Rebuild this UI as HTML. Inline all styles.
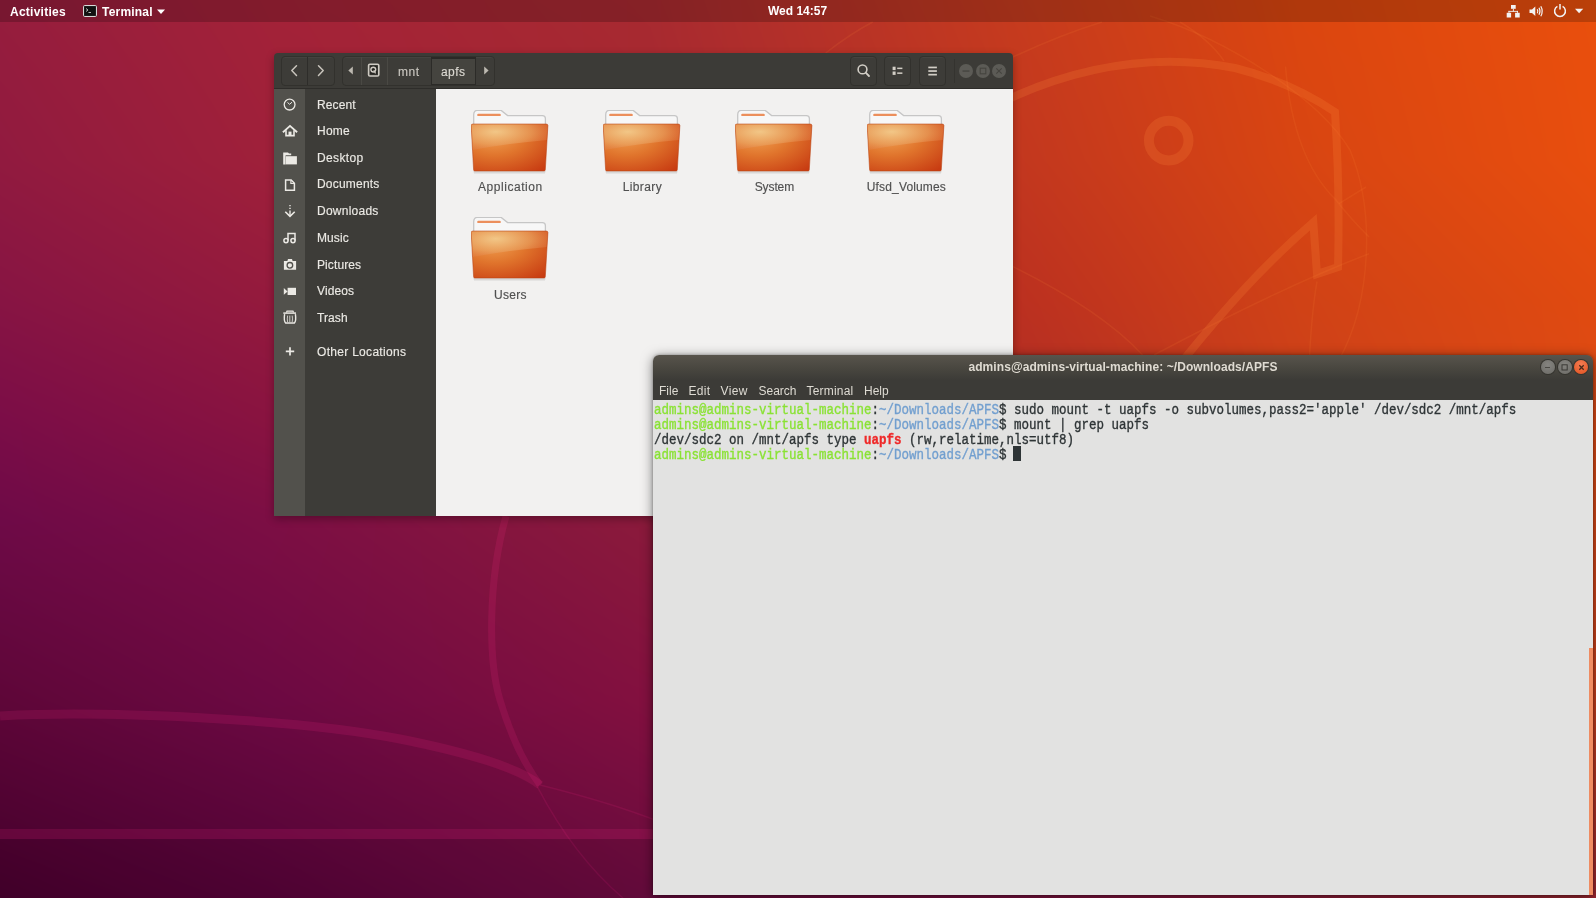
<!DOCTYPE html>
<html><head><meta charset="utf-8">
<style>
*{margin:0;padding:0;box-sizing:border-box}
html,body{width:1596px;height:898px;overflow:hidden;font-family:"Liberation Sans",sans-serif}
body{background:linear-gradient(50deg,#44002c 0%,#700a47 28%,#961d3d 45%,#c63b1e 70%,#e94f0c 100%)}
.abs{position:absolute}
#wall{position:absolute;left:0;top:0;width:1596px;height:898px}
#topbar{position:absolute;left:0;top:0;width:1596px;height:22px;background:rgba(0,0,0,0.2)}
.tb{color:#fff;font-weight:bold;font-size:12px;line-height:14px}
/* nautilus */
#naut{position:absolute;left:274px;top:53px;width:739px;height:463px;border-radius:4px 4px 0 0;overflow:hidden;box-shadow:0 3px 9px rgba(0,0,0,0.3)}
#nhead{position:absolute;left:0;top:0;width:739px;height:36px;background:#3c3b37;border-bottom:1px solid #2e2d2a}
#nside1{position:absolute;left:0;top:36px;width:31px;height:427px;background:#52514c}
#nside2{position:absolute;left:31px;top:36px;width:131px;height:427px;background:#3d3c38}
#ncont{position:absolute;left:162px;top:36px;width:577px;height:427px;background:#f2f1f0}
.hbtn{position:absolute;border:1px solid #32312d;border-radius:4px;background:#3d3c38;box-shadow:inset 0 1px 0 rgba(255,255,255,0.04)}
.hl{color:#c9c6bf;font-size:12px;line-height:14px;letter-spacing:0.6px;-webkit-text-stroke:0.15px currentColor}
.wbtn{position:absolute;top:10.5px;width:14px;height:14px;border-radius:50%;background:#5c5b56}
.wbtn svg{position:absolute;left:0;top:0}
.side{position:absolute;left:43px;color:#ebe9e4;font-size:12px;line-height:14px;letter-spacing:0.1px;-webkit-text-stroke:0.15px currentColor}
.flabel{position:absolute;width:132px;text-align:center;color:#505050;font-size:12px;line-height:14px;-webkit-text-stroke:0.15px currentColor}
/* terminal */
#term{position:absolute;left:653px;top:355px;width:940px;height:540px;border-radius:6px 6px 0 0;overflow:hidden;box-shadow:0 2px 12px rgba(0,0,0,0.5),0 0 3px rgba(0,0,0,0.3)}
#ttitle{position:absolute;left:0;top:0;width:940px;height:45px;background:linear-gradient(#58544c 0px,#48463f 14px,#3c3b37 25px,#3c3b37 45px)}
#tcont{position:absolute;left:0;top:45px;width:940px;height:495px;background:#e2e2e1}
.tline{position:absolute;left:1px;font-family:"Liberation Mono",monospace;font-size:14.3px;color:#2e3436;white-space:pre;line-height:15px;-webkit-text-stroke:0.35px currentColor;transform:scaleX(0.874);transform-origin:0 0}
.g{color:#8ae234}
.b{color:#729fcf}
.r{color:#ef2929;font-weight:bold}
.cur{background:#2e3436}
.menu{position:absolute;top:29px;color:#dfdcd4;font-size:12px;line-height:14px}
.tbtn{position:absolute;top:5px;width:14px;height:14px;border-radius:50%;box-shadow:0 0 0 1px #35342f}
.tbtn svg{position:absolute;left:0.5px;top:0.5px}
</style></head><body>
<svg width="0" height="0" style="position:absolute"><defs>
<linearGradient id="pg" x1="0" y1="0" x2="0" y2="1"><stop offset="0" stop-color="#f6f6f6" stop-opacity="0"/><stop offset="1" stop-color="#c8c8c8"/></linearGradient>
<radialGradient id="fg1" cx="0.3" cy="0.25" r="0.95"><stop offset="0" stop-color="#f0a050"/><stop offset="0.45" stop-color="#e0742c"/><stop offset="1" stop-color="#c83c12"/></radialGradient>
<radialGradient id="fg2" cx="0.32" cy="0.3" r="0.8"><stop offset="0" stop-color="#f2c98a" stop-opacity="0.95"/><stop offset="0.6" stop-color="#eaa666" stop-opacity="0.6"/><stop offset="1" stop-color="#e27a45" stop-opacity="0.3"/></radialGradient>
</defs></svg>
<canvas id="wall" width="1596" height="898"></canvas>
<svg id="art" class="abs" style="left:0;top:0" width="1596" height="898" viewBox="0 0 1596 898" fill="none">
 <g stroke="#ff8a3a" stroke-opacity="0.2" stroke-linejoin="miter">
  <path d="M880 178 Q960 118 1013 97 C1087 64 1161 54 1235 68 C1275 78 1305 92 1335 112 Q1340 190 1338 267 L1317 274 L1313.3 222.2 Q1240 285 1160 390" stroke-width="8"/>
  <circle cx="1168.7" cy="140.6" r="19.8" stroke-width="10"/>
 </g>
 <g stroke="#ff8a3a" stroke-opacity="0.12" stroke-width="1.5">
  <path d="M1150 16 C1230 40 1320 100 1350 150 C1375 210 1372 300 1339 360"/>
  <path d="M1285.5 66.5 C1290 120 1305 170 1336 200 C1350 218 1360 228 1369 237"/>
  <path d="M1339 203.6 L1366 187"/>
  <path d="M1153.9 355 C1220 320 1300 280 1369 253.7"/>
  <path d="M1013 266.7 C1060 290 1110 320 1142.7 355"/>
  <path d="M1309.6 355 Q1312 310 1317 281.5"/>
  <path d="M1013 57 Q1060 35 1102 22"/>
  <path d="M1180 22 Q1210 40 1224 61"/>
  <path d="M825.7 53 Q850 34 872.7 22"/>
 </g>
 <g stroke="#ff2a8a" stroke-opacity="0.14">
  <path d="M0 716 C100 710 300 719 400 739 C470 753 520 769 540 785" stroke-width="9"/>
  <path d="M506 516 C488 580 488 660 500 700 C512 740 525 765 540 785" stroke-width="7"/>
  <path d="M0 834 H660" stroke-width="10"/>
 </g>
 <g stroke="#ff2a8a" stroke-opacity="0.12" stroke-width="1.6">
  <path d="M540 785 C580 795 620 806 660 822"/>
  <path d="M537.5 787 C560 830 590 870 623 898"/>
 </g>
 <rect x="0" y="839" width="660" height="59" fill="#000" fill-opacity="0.05"/>
</svg>
<script>
(function(){
var xs=[0,270,650,1013,1300,1596], ys=[0,160,300,420,520,700,898];
var G=[
["961d3d","a32238","a82a30","c63b1e","dc460f","e94f0c"],
["911a3f","9f203a","a52730","c2371f","d84512","e84e0e"],
["871443","941a3d","a1232f","bb3020","d04216","e04a10"],
["7b0d47","891340","96203a","b02d26","cc401b","dd4a16"],
["6e0a47","7c0e44","8b1a3b","a82a28","c53c1c","d84818"],
["5e0638","6c0942","83103f","8e1a3a","a82a28","c83f1c"],
["44002c","520335","680b3e","7a1040","8a1a38","9a2630"]];
function h(s){return [parseInt(s.substr(0,2),16),parseInt(s.substr(2,2),16),parseInt(s.substr(4,2),16)];}
var C=G.map(function(r){return r.map(h);});
var cv=document.getElementById('wall'),ctx=cv.getContext('2d');
var W=1596,H=898,img=ctx.createImageData(W,H),d=img.data;
var xi=new Array(W),xt=new Array(W);
for(var x=0;x<W;x++){var i=0;while(i<xs.length-2&&x>xs[i+1])i++;xi[x]=i;xt[x]=(x-xs[i])/(xs[i+1]-xs[i]);}
for(var y=0;y<H;y++){var j=0;while(j<ys.length-2&&y>ys[j+1])j++;var ty=(y-ys[j])/(ys[j+1]-ys[j]);
 for(var x=0;x<W;x++){var i=xi[x],tx=xt[x],p=(y*W+x)*4;
  for(var k=0;k<3;k++){var a=C[j][i][k]*(1-tx)+C[j][i+1][k]*tx,b=C[j+1][i][k]*(1-tx)+C[j+1][i+1][k]*tx;d[p+k]=a*(1-ty)+b*ty;}
  d[p+3]=255;}}
ctx.putImageData(img,0,0);
})();
</script>

<div id="topbar">
 <div class="abs tb" style="left:10px;top:4.5px;letter-spacing:0.25px">Activities</div>
 <svg class="abs" style="left:83px;top:5px" width="14" height="12" viewBox="0 0 14 12">
  <rect x="0.5" y="0.5" width="13" height="11" rx="1.2" fill="#2a2a2a" stroke="#d8d8d8" stroke-width="1"/>
  <rect x="1.5" y="1.5" width="11" height="9" fill="#111"/>
  <path d="M3 3.5 L5 5 L3 6.5" stroke="#ccc" stroke-width="0.9" fill="none"/>
  <rect x="5.5" y="7" width="2.5" height="0.9" fill="#ccc"/>
 </svg>
 <div class="abs tb" style="left:102px;top:4.5px;letter-spacing:0.2px">Terminal</div>
 <svg class="abs" style="left:156px;top:9px" width="10" height="6" viewBox="0 0 10 6"><path d="M1 0.5 H9 L5 5 Z" fill="#fff"/></svg>
 <div class="abs tb" style="left:768px;top:4px">Wed 14:57</div>
 <svg class="abs" style="left:1504px;top:3px" width="18" height="16" viewBox="0 0 18 16" fill="#f2f2f2">
  <rect x="7" y="2" width="4.7" height="3.8"/>
  <rect x="2.7" y="9.8" width="4.4" height="4.7"/>
  <rect x="11.1" y="9.8" width="4.6" height="4.7"/>
  <rect x="8.9" y="5.6" width="0.9" height="2.8"/>
  <rect x="4.5" y="7.9" width="9.4" height="0.9"/>
  <rect x="4.5" y="7.9" width="0.9" height="2"/>
  <rect x="13" y="7.9" width="0.9" height="2"/>
 </svg>
 <svg class="abs" style="left:1527px;top:3px" width="18" height="16" viewBox="0 0 18 16" fill="none">
  <path d="M2.5 6.5 H5 L8.3 3.5 V13 L5 10 H2.5 Z" fill="#f2f2f2"/>
  <path d="M10.3 6.3 Q11.4 8.2 10.3 10.2" stroke="#f2f2f2" stroke-width="1.2"/>
  <path d="M12 4.8 Q14 8.2 12 11.7" stroke="#f2f2f2" stroke-width="1.2"/>
  <path d="M13.8 3.2 Q16.6 8.2 13.8 13.3" stroke="#f2f2f2" stroke-width="1.2"/>
 </svg>
 <svg class="abs" style="left:1552px;top:3px" width="16" height="16" viewBox="0 0 16 16" fill="none">
  <path d="M5.4 3.4 A5.4 5.4 0 1 0 10.6 3.4" stroke="#f2f2f2" stroke-width="1.5"/>
  <path d="M8 1 V6.6" stroke="#f2f2f2" stroke-width="1.5"/>
 </svg>
 <svg class="abs" style="left:1574px;top:8px" width="10" height="6" viewBox="0 0 10 6"><path d="M1 0.8 H9.2 L5.1 5.2 Z" fill="#f2f2f2"/></svg>
</div>

<div id="naut">
 <div id="nhead">
  <div class="hbtn" style="left:7px;top:3px;width:54px;height:30px"></div>
  <div class="abs" style="left:33px;top:4px;width:1px;height:28px;background:#2e2d2a"></div>
  <svg class="abs" style="left:14px;top:10px" width="40" height="16" viewBox="0 0 40 16" fill="none" stroke="#c8c4bc" stroke-width="1.5" stroke-linecap="round" stroke-linejoin="round">
   <path d="M8.5 2.8 L3.8 7.6 L8.5 12.4"/>
   <path d="M30.5 2.8 L35.2 7.6 L30.5 12.4"/>
  </svg>
  <div class="hbtn" style="left:68px;top:3px;width:153px;height:30px"></div>
  <div class="abs" style="left:87px;top:4px;width:1px;height:28px;background:#4a4944"></div>
  <div class="abs" style="left:113px;top:4px;width:1px;height:28px;background:#4a4944"></div>
  <div class="abs" style="left:157px;top:4px;width:45px;height:28px;background:#45443f;border:1px solid #2c2b28;border-top:2px solid #2a2926"></div>
  <svg class="abs" style="left:72px;top:10px" width="12" height="16" viewBox="0 0 12 16"><path d="M6.8 3.5 V11.5 L2.3 7.5 Z" fill="#bdb9b1"/></svg>
  <svg class="abs" style="left:93px;top:10px" width="14" height="15" viewBox="0 0 14 15" fill="none">
   <rect x="1.6" y="1.2" width="10.2" height="11.8" rx="1.3" stroke="#cfcbc3" stroke-width="1.6"/>
   <rect x="3.2" y="2.8" width="7" height="8.6" fill="#262521"/>
   <circle cx="6.3" cy="6.6" r="2.4" stroke="#cfcbc3" stroke-width="1.4"/>
   <path d="M6.8 7.2 L8.6 10.4" stroke="#cfcbc3" stroke-width="1.2"/>
  </svg>
  <div class="abs hl" style="left:124px;top:11.5px">mnt</div>
  <div class="abs hl" style="left:167px;top:11.5px;color:#dcd9d2;letter-spacing:0.45px">apfs</div>
  <svg class="abs" style="left:207px;top:10px" width="10" height="16" viewBox="0 0 10 16"><path d="M3.2 3.5 V11.5 L7.6 7.5 Z" fill="#bdb9b1"/></svg>

  <div class="hbtn" style="left:576px;top:3px;width:27px;height:30px"></div>
  <div class="hbtn" style="left:610px;top:3px;width:27px;height:30px"></div>
  <div class="hbtn" style="left:645px;top:3px;width:27px;height:30px"></div>
  <svg class="abs" style="left:580px;top:8px" width="20" height="20" viewBox="0 0 20 20" fill="none" stroke="#d2cec6" stroke-width="1.6">
   <circle cx="8.5" cy="8.4" r="4.4"/>
   <path d="M11.7 11.6 L15 15" stroke-linecap="round" stroke-width="1.8"/>
  </svg>
  <svg class="abs" style="left:614px;top:8px" width="20" height="20" viewBox="0 0 20 20" fill="#d2cec6">
   <rect x="4.6" y="5.7" width="3" height="3.4"/><rect x="4.6" y="10.5" width="3" height="3.4"/>
   <rect x="9.2" y="6.6" width="5.2" height="1.5"/><rect x="9.2" y="11.4" width="5.2" height="1.5"/>
  </svg>
  <svg class="abs" style="left:649px;top:8px" width="20" height="20" viewBox="0 0 20 20" fill="#d2cec6">
   <rect x="5.3" y="5.6" width="8.6" height="1.7"/><rect x="5.3" y="9.2" width="8.6" height="1.7"/><rect x="5.3" y="12.8" width="8.6" height="1.7"/>
  </svg>
  <div class="abs" style="left:680px;top:6px;width:1px;height:24px;background:#34332f"></div>
  <div class="wbtn" style="left:685px"><svg width="14" height="14" viewBox="0 0 14 14"><rect x="3.5" y="6.4" width="7" height="1.3" fill="#45443f"/></svg></div>
  <div class="wbtn" style="left:702px"><svg width="14" height="14" viewBox="0 0 14 14"><rect x="4.2" y="4.2" width="5.6" height="5.6" fill="none" stroke="#45443f" stroke-width="1.1"/></svg></div>
  <div class="wbtn" style="left:718px"><svg width="14" height="14" viewBox="0 0 14 14"><path d="M4.3 4.3 L9.7 9.7 M9.7 4.3 L4.3 9.7" stroke="#45443f" stroke-width="1.1"/></svg></div>
 </div>
 <div id="nside1"></div>
 <div id="nside2"></div>
 <div id="ncont"></div>
 <svg class="abs" style="left:0;top:36px" width="31" height="330" viewBox="0 0 31 330" fill="none" stroke="#ebe9e4" stroke-width="1.4">
  <circle cx="15.6" cy="15.6" r="5.4" stroke-width="1.3"/>
  <path d="M13.5 13.5 L15.6 15.3 L18 13.2" stroke-width="1"/>
  <path d="M9.6 42.6 L16 36.9 L22.4 42.6" stroke-width="1.9" stroke-linecap="square"/>
  <path d="M12 41.2 V46.6 H20 V41.2" stroke-width="1.6"/>
  <rect x="14.5" y="42.6" width="3" height="4.4" fill="#ebe9e4" stroke="none"/>
  <path d="M9.2 63.4 H14 L15 64.4 H17.2 V66.3 H11.6 V75.4 H9.2 Z" fill="#ebe9e4" stroke="none"/>
  <rect x="11.8" y="67.2" width="11.1" height="8.2" fill="#ebe9e4" stroke="none"/>
  <path d="M11.6 91 H17.2 L20.4 94.2 V101.3 H11.6 Z" stroke-width="1.5" stroke-linejoin="miter"/>
  <path d="M16.9 91.2 V94.5 H20.2" stroke-width="1.2"/>
  <path d="M16 116 V117.2 M16 118.8 V120 M16 121.6 V126.6" stroke-width="1.4"/>
  <path d="M11.3 122.8 L16 127.4 L20.7 122.8" stroke-width="1.6"/>
  <path d="M14 151.4 V144.5 H21 V151.4" stroke-width="1.5"/>
  <circle cx="12" cy="151.6" r="2.1" stroke-width="1.5"/>
  <circle cx="19" cy="151.6" r="2.1" stroke-width="1.5"/>
  <path d="M9.9 172 H13.4 L14 170 H18 L18.6 172 H22.1 V180.7 H9.9 Z" fill="#ebe9e4" stroke="none"/>
  <circle cx="15.9" cy="176.3" r="2.8" fill="none" stroke="#52514c" stroke-width="1.3"/>
  <circle cx="15.9" cy="176.3" r="1.1" fill="#ebe9e4" stroke="none"/>
  <path d="M9.8 199 L13.6 202.4 L9.8 205.8 Z" fill="#ebe9e4" stroke="none"/>
  <rect x="13.6" y="198.8" width="8.4" height="7.2" fill="#ebe9e4" stroke="none"/>
  <path d="M9.3 224.1 H22" stroke-width="1.5"/>
  <path d="M12.4 223.4 L13 222.2 H19 L19.6 223.4" stroke-width="1.2"/>
  <path d="M10.6 225.2 Q9.6 232 11.6 234 H20.4 Q22.4 232 21.4 225.2" stroke-width="1.4"/>
  <path d="M13.6 226.6 Q13 230 13.6 233 M15.8 226.6 V233 M18.2 226.6 Q18.8 230 18.2 233" stroke-width="0.8"/>
  <path d="M16 258.2 V266.6 M11.8 262.4 H20.2" stroke-width="1.7"/>
 </svg>
 <div class="side" style="top:44.6px">Recent</div>
 <div class="side" style="top:71.1px;letter-spacing:0.25px">Home</div>
 <div class="side" style="top:97.6px;letter-spacing:0.35px">Desktop</div>
 <div class="side" style="top:124.1px;letter-spacing:0.2px">Documents</div>
 <div class="side" style="top:150.6px;letter-spacing:0.25px">Downloads</div>
 <div class="side" style="top:178px">Music</div>
 <div class="side" style="top:204.5px">Pictures</div>
 <div class="side" style="top:231.2px">Videos</div>
 <div class="side" style="top:257.5px">Trash</div>
 <div class="side" style="top:291.8px;letter-spacing:0.3px">Other Locations</div>
 <svg class="abs" style="left:197.2px;top:57px" width="80" height="66" viewBox="0 0 80 66">
  <path d="M2.7 5 Q2.7 0.4 6.2 0.4 H30.2 L36.6 5.6 H71.4 Q74.4 5.6 74.4 8.6 V20 H2.7 Z" fill="#f7f7f7" stroke="#c6c6c6" stroke-width="1.3"/>
  <path d="M2.7 13 H74.4 V20 H2.7 Z" fill="url(#pg)"/>
  <rect x="6.2" y="3.7" width="23.6" height="2.4" rx="1.2" fill="#ec8f5c"/>
  <path d="M2.4 61 H74.6 L74 63.4 H3 Z" fill="#000" fill-opacity="0.1"/>
  <path d="M0.2 15.5 Q0.2 14 2 14 H75.1 Q76.9 14 76.9 15.5 L74.3 59.8 Q74.3 61 73 61 H3.8 Q2.6 61 2.6 59.8 Z" fill="url(#fg1)"/>
  <path d="M0.2 15.5 Q0.2 14 2 14 H75.1 Q76.9 14 76.9 15.5 L76 30 Q40 33 1.5 40 Z" fill="url(#fg2)"/>
  <path d="M0.2 15.5 Q0.2 14 2 14 H75.1 Q76.9 14 76.9 15.5 L74.3 59.8 Q74.3 61 73 61 H3.8 Q2.6 61 2.6 59.8 Z" fill="none" stroke="#b8400f" stroke-opacity="0.6" stroke-width="0.9"/>
 </svg><div class="flabel" style="left:170.4px;top:127.3px;letter-spacing:0.54px">Application</div>
<svg class="abs" style="left:329.2px;top:57px" width="80" height="66" viewBox="0 0 80 66">
  <path d="M2.7 5 Q2.7 0.4 6.2 0.4 H30.2 L36.6 5.6 H71.4 Q74.4 5.6 74.4 8.6 V20 H2.7 Z" fill="#f7f7f7" stroke="#c6c6c6" stroke-width="1.3"/>
  <path d="M2.7 13 H74.4 V20 H2.7 Z" fill="url(#pg)"/>
  <rect x="6.2" y="3.7" width="23.6" height="2.4" rx="1.2" fill="#ec8f5c"/>
  <path d="M2.4 61 H74.6 L74 63.4 H3 Z" fill="#000" fill-opacity="0.1"/>
  <path d="M0.2 15.5 Q0.2 14 2 14 H75.1 Q76.9 14 76.9 15.5 L74.3 59.8 Q74.3 61 73 61 H3.8 Q2.6 61 2.6 59.8 Z" fill="url(#fg1)"/>
  <path d="M0.2 15.5 Q0.2 14 2 14 H75.1 Q76.9 14 76.9 15.5 L76 30 Q40 33 1.5 40 Z" fill="url(#fg2)"/>
  <path d="M0.2 15.5 Q0.2 14 2 14 H75.1 Q76.9 14 76.9 15.5 L74.3 59.8 Q74.3 61 73 61 H3.8 Q2.6 61 2.6 59.8 Z" fill="none" stroke="#b8400f" stroke-opacity="0.6" stroke-width="0.9"/>
 </svg><div class="flabel" style="left:302.4px;top:127.3px;letter-spacing:0.4px">Library</div>
<svg class="abs" style="left:461.2px;top:57px" width="80" height="66" viewBox="0 0 80 66">
  <path d="M2.7 5 Q2.7 0.4 6.2 0.4 H30.2 L36.6 5.6 H71.4 Q74.4 5.6 74.4 8.6 V20 H2.7 Z" fill="#f7f7f7" stroke="#c6c6c6" stroke-width="1.3"/>
  <path d="M2.7 13 H74.4 V20 H2.7 Z" fill="url(#pg)"/>
  <rect x="6.2" y="3.7" width="23.6" height="2.4" rx="1.2" fill="#ec8f5c"/>
  <path d="M2.4 61 H74.6 L74 63.4 H3 Z" fill="#000" fill-opacity="0.1"/>
  <path d="M0.2 15.5 Q0.2 14 2 14 H75.1 Q76.9 14 76.9 15.5 L74.3 59.8 Q74.3 61 73 61 H3.8 Q2.6 61 2.6 59.8 Z" fill="url(#fg1)"/>
  <path d="M0.2 15.5 Q0.2 14 2 14 H75.1 Q76.9 14 76.9 15.5 L76 30 Q40 33 1.5 40 Z" fill="url(#fg2)"/>
  <path d="M0.2 15.5 Q0.2 14 2 14 H75.1 Q76.9 14 76.9 15.5 L74.3 59.8 Q74.3 61 73 61 H3.8 Q2.6 61 2.6 59.8 Z" fill="none" stroke="#b8400f" stroke-opacity="0.6" stroke-width="0.9"/>
 </svg><div class="flabel" style="left:434.4px;top:127.3px;letter-spacing:-0.1px">System</div>
<svg class="abs" style="left:593.2px;top:57px" width="80" height="66" viewBox="0 0 80 66">
  <path d="M2.7 5 Q2.7 0.4 6.2 0.4 H30.2 L36.6 5.6 H71.4 Q74.4 5.6 74.4 8.6 V20 H2.7 Z" fill="#f7f7f7" stroke="#c6c6c6" stroke-width="1.3"/>
  <path d="M2.7 13 H74.4 V20 H2.7 Z" fill="url(#pg)"/>
  <rect x="6.2" y="3.7" width="23.6" height="2.4" rx="1.2" fill="#ec8f5c"/>
  <path d="M2.4 61 H74.6 L74 63.4 H3 Z" fill="#000" fill-opacity="0.1"/>
  <path d="M0.2 15.5 Q0.2 14 2 14 H75.1 Q76.9 14 76.9 15.5 L74.3 59.8 Q74.3 61 73 61 H3.8 Q2.6 61 2.6 59.8 Z" fill="url(#fg1)"/>
  <path d="M0.2 15.5 Q0.2 14 2 14 H75.1 Q76.9 14 76.9 15.5 L76 30 Q40 33 1.5 40 Z" fill="url(#fg2)"/>
  <path d="M0.2 15.5 Q0.2 14 2 14 H75.1 Q76.9 14 76.9 15.5 L74.3 59.8 Q74.3 61 73 61 H3.8 Q2.6 61 2.6 59.8 Z" fill="none" stroke="#b8400f" stroke-opacity="0.6" stroke-width="0.9"/>
 </svg><div class="flabel" style="left:566.4px;top:127.3px;letter-spacing:0.15px">Ufsd_Volumes</div>
<svg class="abs" style="left:197.2px;top:164px" width="80" height="66" viewBox="0 0 80 66">
  <path d="M2.7 5 Q2.7 0.4 6.2 0.4 H30.2 L36.6 5.6 H71.4 Q74.4 5.6 74.4 8.6 V20 H2.7 Z" fill="#f7f7f7" stroke="#c6c6c6" stroke-width="1.3"/>
  <path d="M2.7 13 H74.4 V20 H2.7 Z" fill="url(#pg)"/>
  <rect x="6.2" y="3.7" width="23.6" height="2.4" rx="1.2" fill="#ec8f5c"/>
  <path d="M2.4 61 H74.6 L74 63.4 H3 Z" fill="#000" fill-opacity="0.1"/>
  <path d="M0.2 15.5 Q0.2 14 2 14 H75.1 Q76.9 14 76.9 15.5 L74.3 59.8 Q74.3 61 73 61 H3.8 Q2.6 61 2.6 59.8 Z" fill="url(#fg1)"/>
  <path d="M0.2 15.5 Q0.2 14 2 14 H75.1 Q76.9 14 76.9 15.5 L76 30 Q40 33 1.5 40 Z" fill="url(#fg2)"/>
  <path d="M0.2 15.5 Q0.2 14 2 14 H75.1 Q76.9 14 76.9 15.5 L74.3 59.8 Q74.3 61 73 61 H3.8 Q2.6 61 2.6 59.8 Z" fill="none" stroke="#b8400f" stroke-opacity="0.6" stroke-width="0.9"/>
 </svg><div class="flabel" style="left:170.4px;top:234.6px;letter-spacing:0.3px">Users</div>

</div>

<div id="term">
 <div id="ttitle">
  <div class="abs" style="left:0;top:5px;width:940px;text-align:center;color:#dfdbd2;font-weight:bold;font-size:12px;letter-spacing:0.08px">admins@admins-virtual-machine: ~/Downloads/APFS</div>
  <div class="menu" style="left:6px">File</div>
  <div class="menu" style="left:35.5px;letter-spacing:0.3px">Edit</div>
  <div class="menu" style="left:67.5px;letter-spacing:0.4px">View</div>
  <div class="menu" style="left:105.5px">Search</div>
  <div class="menu" style="left:153.5px;letter-spacing:0.2px">Terminal</div>
  <div class="menu" style="left:211px">Help</div>
  <div class="tbtn" style="left:887.5px;background:radial-gradient(circle at 50% 35%,#858480,#6c6b66)"><svg width="13" height="13" viewBox="0 0 13 13"><rect x="4" y="6" width="5" height="1" fill="#4a4944"/></svg></div>
  <div class="tbtn" style="left:904.5px;background:radial-gradient(circle at 50% 35%,#858480,#6c6b66)"><svg width="13" height="13" viewBox="0 0 13 13"><rect x="4" y="3.8" width="5.2" height="5.2" fill="none" stroke="#3a3935" stroke-width="1"/></svg></div>
  <div class="tbtn" style="left:921px;background:radial-gradient(circle at 50% 30%,#f47c52,#e2521f)"><svg width="13" height="13" viewBox="0 0 13 13"><path d="M4.3 4.3 L8.7 8.7 M8.7 4.3 L4.3 8.7" stroke="#4a2a1a" stroke-width="1.3"/></svg></div>
 </div>
 <div id="tcont">
  <div class="tline" style="top:2.5px"><span class="g">admins@admins-virtual-machine</span>:<span class="b">~/Downloads/APFS</span>$ sudo mount -t uapfs -o subvolumes,pass2='apple' /dev/sdc2 /mnt/apfs</div>
  <div class="tline" style="top:17.5px"><span class="g">admins@admins-virtual-machine</span>:<span class="b">~/Downloads/APFS</span>$ mount | grep uapfs</div>
  <div class="tline" style="top:32.5px">/dev/sdc2 on /mnt/apfs type <span class="r">uapfs</span> (rw,relatime,nls=utf8)</div>
  <div class="tline" style="top:47.5px"><span class="g">admins@admins-virtual-machine</span>:<span class="b">~/Downloads/APFS</span>$ </div>
  <div class="abs" style="left:360px;top:46px;width:7.8px;height:14.8px;background:#2e3436"></div>
  <div class="abs" style="left:935.5px;top:248px;width:4.5px;height:247px;background:#ef8c62"></div>
 </div>
</div>
</body></html>
